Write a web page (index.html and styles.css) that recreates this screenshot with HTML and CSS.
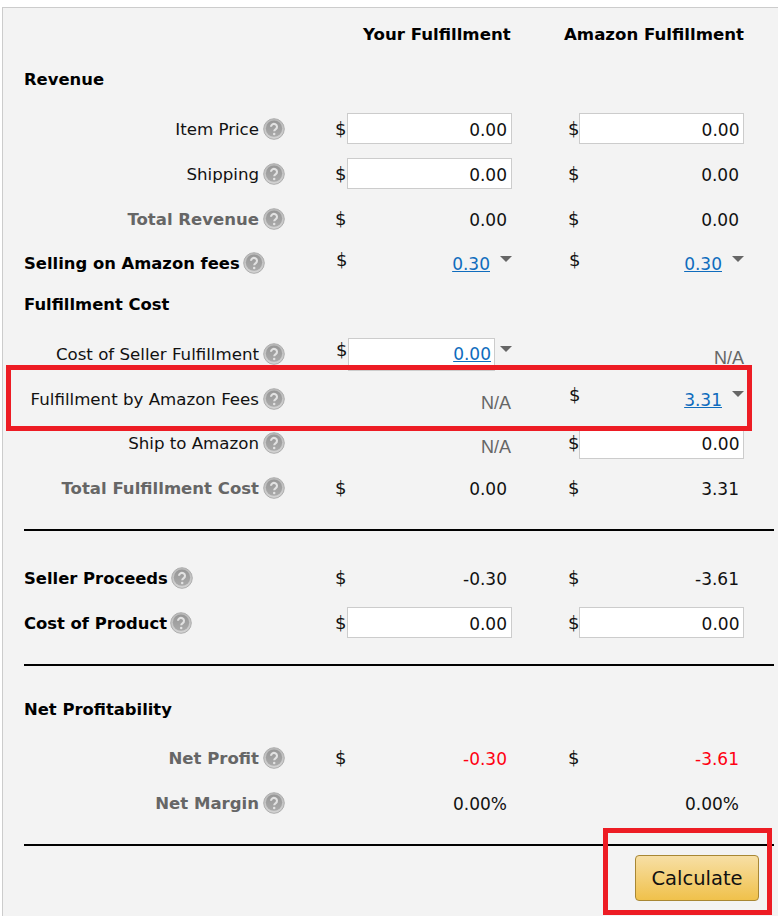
FILE: index.html
```html
<!DOCTYPE html>
<html lang="en">
<head>
<meta charset="utf-8">
<title>Fulfillment calculator</title>
<link rel="stylesheet" href="styles.css">
</head>
<body>
<svg class="defs" width="0" height="0" aria-hidden="true">
  <defs>
    <linearGradient id="hg" x1="0" y1="0" x2="0" y2="1">
      <stop offset="0" stop-color="#b8b8b8"/>
      <stop offset="0.6" stop-color="#c8c8c8"/>
      <stop offset="1" stop-color="#d4d4d4"/>
    </linearGradient>
    <linearGradient id="hd" x1="0" y1="0" x2="0" y2="1">
      <stop offset="0" stop-color="#979797"/>
      <stop offset="1" stop-color="#aaaaaa"/>
    </linearGradient>
    <symbol id="help" viewBox="0 0 22 22">
      <circle cx="11" cy="11" r="10.3" fill="url(#hg)" stroke="#aeaeae" stroke-width="1"/>
      <circle cx="11" cy="10.6" r="8.2" fill="url(#hd)"/>
      <path d="M8 8.8a3 2.9 0 1 1 4.8 2.3c-1 .7-1.6 1.1-1.6 2.2" fill="none" stroke="#e2e2e2" stroke-width="2.1"/>
      <circle cx="11.2" cy="15.9" r="1.25" fill="#e2e2e2"/>
    </symbol>
  </defs>
</svg>
<main class="panel">
  <div class="row head">
    <span></span>
    <strong class="col-title t1">Your Fulfillment</strong>
    <strong class="col-title t2">Amazon Fulfillment</strong>
  </div>
  <div class="row title r-rev"><strong>Revenue</strong></div>

  <div class="row r-item">
    <div class="label"><span>Item Price</span><svg class="help"><use href="#help"/></svg></div>
    <div class="cell"><span class="usd">$</span><input class="amount" value="0.00"></div>
    <div class="cell"><span class="usd">$</span><input class="amount" value="0.00"></div>
  </div>
  <div class="row">
    <div class="label"><span>Shipping</span><svg class="help"><use href="#help"/></svg></div>
    <div class="cell"><span class="usd">$</span><input class="amount" value="0.00"></div>
    <div class="cell"><span class="usd">$</span><span class="val">0.00</span></div>
  </div>
  <div class="row">
    <div class="label muted"><span>Total Revenue</span><svg class="help"><use href="#help"/></svg></div>
    <div class="cell"><span class="usd">$</span><span class="val">0.00</span></div>
    <div class="cell"><span class="usd">$</span><span class="val">0.00</span></div>
  </div>
  <div class="row r-sell">
    <div class="label left"><strong>Selling on Amazon fees</strong><svg class="help"><use href="#help"/></svg></div>
    <div class="cell"><span class="usd high">$</span><a class="fee" href="#">0.30</a><i class="caret"></i></div>
    <div class="cell"><span class="usd high">$</span><a class="fee" href="#">0.30</a><i class="caret"></i></div>
  </div>
  <div class="row title r-ful"><strong>Fulfillment Cost</strong></div>

  <div class="row r-cost">
    <div class="label"><span>Cost of Seller Fulfillment</span><svg class="help"><use href="#help"/></svg></div>
    <div class="cell"><span class="usd high">$</span><span class="mini"><a href="#">0.00</a></span><i class="caret"></i></div>
    <div class="cell"><span class="na end">N/A</span></div>
  </div>
  <div class="row">
    <div class="label"><span>Fulfillment by Amazon Fees</span><svg class="help"><use href="#help"/></svg></div>
    <div class="cell"><span class="na">N/A</span></div>
    <div class="cell"><span class="usd high">$</span><a class="fee" href="#">3.31</a><i class="caret"></i></div>
  </div>
  <div class="row r-ship">
    <div class="label"><span>Ship to Amazon</span><svg class="help"><use href="#help"/></svg></div>
    <div class="cell"><span class="na">N/A</span></div>
    <div class="cell"><span class="usd">$</span><input class="amount" value="0.00"></div>
  </div>
  <div class="row">
    <div class="label muted"><span>Total Fulfillment Cost</span><svg class="help"><use href="#help"/></svg></div>
    <div class="cell"><span class="usd">$</span><span class="val">0.00</span></div>
    <div class="cell"><span class="usd">$</span><span class="val">3.31</span></div>
  </div>
  <hr class="rule r1">

  <div class="row">
    <div class="label left"><strong>Seller Proceeds</strong><svg class="help"><use href="#help"/></svg></div>
    <div class="cell"><span class="usd">$</span><span class="val">-0.30</span></div>
    <div class="cell"><span class="usd">$</span><span class="val">-3.61</span></div>
  </div>
  <div class="row">
    <div class="label left"><strong>Cost of Product</strong><svg class="help"><use href="#help"/></svg></div>
    <div class="cell"><span class="usd">$</span><input class="amount" value="0.00"></div>
    <div class="cell"><span class="usd">$</span><input class="amount" value="0.00"></div>
  </div>
  <hr class="rule r2">

  <div class="row title r-net"><strong>Net Profitability</strong></div>
  <div class="row r-profit">
    <div class="label muted"><span>Net Profit</span><svg class="help"><use href="#help"/></svg></div>
    <div class="cell"><span class="usd">$</span><span class="val neg">-0.30</span></div>
    <div class="cell"><span class="usd">$</span><span class="val neg">-3.61</span></div>
  </div>
  <div class="row">
    <div class="label muted"><span>Net Margin</span><svg class="help"><use href="#help"/></svg></div>
    <div class="cell"><span></span><span class="val">0.00%</span></div>
    <div class="cell"><span></span><span class="val">0.00%</span></div>
  </div>
  <hr class="rule r3">
  <div class="actions"><button class="calc" type="button">Calculate</button></div>
</main>
<div class="mark mark-fba"></div>
<div class="mark mark-calc"></div>
</body>
</html>
```

FILE: styles.css
```css
* { box-sizing: border-box; }
html, body { margin: 0; padding: 0; background: #fff; overflow: hidden; }
body { position: relative; width: 778px; height: 916px; font: 17px/20px "DejaVu Sans", Verdana, sans-serif; color: #111; }
.defs { position: absolute; }
.panel {
  margin: 7px 0 0 2px;
  height: 909px;
  padding: 5px 4px 0 21px;
  background: #f3f3f3;
  border-left: 1px solid #ccc;
  border-top: 1px solid #ccc;
  overflow: hidden;
}
.row {
  display: grid;
  grid-template-columns: 261px 176px 176px;
  column-gap: 51px;
  align-items: center;
  height: 45px;
}
.row > :nth-child(3) { margin-left: 6px; margin-right: -5px; }
strong { font-size: 16.4px; }
.head { height: 44px; }
.col-title { white-space: nowrap; font-size: 16.6px; color: #000; }
.t1 { margin-left: 27px; }
.row > .t2 { margin-left: 1px; }
.title strong { color: #000; white-space: nowrap; }
.title { display: flex; }
.r-item { margin-top: 5px; }
.r-sell { height: 44px; }
.r-ful { height: 38px; }
.r-cost { margin-top: 8px; }
.r-ship { height: 44px; }
.r-net { margin-top: 22px; height: 44px; }
.r-profit { margin-top: 4px; }
.label { display: flex; justify-content: flex-end; align-items: center; gap: 4px; white-space: nowrap; font-size: 16.65px; }
.label.left { justify-content: flex-start; gap: 3px; }
.label.muted { font-weight: 700; font-size: 16.55px; color: #666; }
.label strong { color: #000; }
.help { width: 22px; height: 22px; flex: none; margin-top: -2px; }
.cell { display: flex; align-items: center; justify-content: space-between; height: 100%; }
.usd { font-size: 18px; color: #111; margin-top: -2px; margin-left: -1px; }
.usd.high { margin-top: -9px; margin-left: 0; }
.amount {
  width: 165px;
  height: 31px;
  border: 1px solid #ccc;
  background: #fff;
  padding: 2px 4px 0 0;
  margin: -2px 0 0;
  font: inherit;
  color: #111;
  text-align: right;
  border-radius: 0;
  outline: none;
}
.val { margin-left: auto; padding-right: 5px; }
.neg { color: #f01; }
.fee { margin-left: auto; margin-right: 10px; color: #0f6cbd; }
.mini { margin-left: auto; margin-right: 5px; width: 147px; height: 33px; background: #fff; border: 1px solid #ccc; text-align: right; padding: 5px 3px 0 0; }
.mini a { color: #0f6cbd; }
.caret { flex: none; width: 0; height: 0; border-left: 6px solid transparent; border-right: 6px solid transparent; border-top: 6px solid #666; margin-top: -11px; }
.na { margin-left: auto; margin-top: 6px; margin-right: 1px; font-family: "Liberation Sans", Arial, sans-serif; color: #666; font-size: 18px; }
.na.end { margin-right: 0; }
.rule { height: 2px; margin: 0; border: 0; background: #000; width: 750px; }
.r1 { margin-top: 18px; }
.r2 { margin-top: 18px; }
.r3 { margin-top: 18px; }
.r1 + .row { margin-top: 25px; }
.actions { display: flex; justify-content: flex-end; padding: 9px 15px 0 0; }
.calc {
  width: 124px;
  height: 46px;
  font: 19.5px "DejaVu Sans", Verdana, sans-serif;
  color: #111;
  background: linear-gradient(#f7dfa5, #f0c14b);
  border: 1px solid #a88734;
  border-radius: 4px;
  padding: 0;
}
.mark { position: absolute; border: 5px solid #ed1c24; }
.mark-fba { left: 6px; top: 365px; width: 746px; height: 66px; }
.mark-calc { left: 603px; top: 828px; width: 169px; height: 87px; }
```
